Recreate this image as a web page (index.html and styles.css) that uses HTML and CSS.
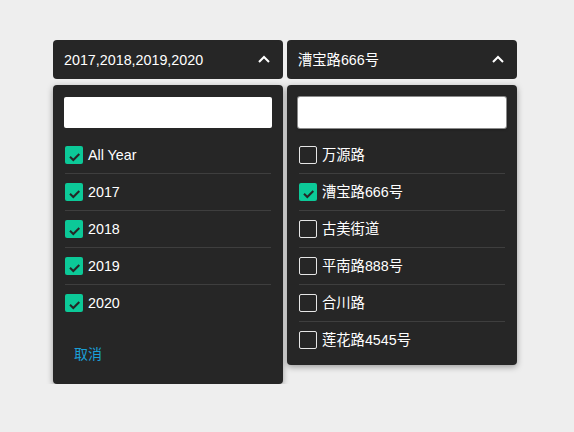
FILE: index.html
```html
<!DOCTYPE html>
<html lang="zh">
<head>
<meta charset="utf-8">
<link rel="stylesheet" href="styles.css">
</head>
<body>
<div class="page">
  <div class="select">
    <div class="head">
      <span class="value">2017,2018,2019,2020</span>
      <svg class="chev" width="12" height="8" viewBox="0 0 12 8"><path d="M1 7 L6 2 L11 7" fill="none" stroke="#fff" stroke-width="2"/></svg>
    </div>
    <div class="panel">
      <div class="search"></div>
      <ul class="list">
        <li class="row"><span class="box on"><svg viewBox="0 0 18 18"><path d="M5 10.8 L8.3 14 L14.3 8" fill="none" stroke="#262626" stroke-width="2"/></svg></span>All Year</li>
        <li class="row"><span class="box on"><svg viewBox="0 0 18 18"><path d="M5 10.8 L8.3 14 L14.3 8" fill="none" stroke="#262626" stroke-width="2"/></svg></span>2017</li>
        <li class="row"><span class="box on"><svg viewBox="0 0 18 18"><path d="M5 10.8 L8.3 14 L14.3 8" fill="none" stroke="#262626" stroke-width="2"/></svg></span>2018</li>
        <li class="row"><span class="box on"><svg viewBox="0 0 18 18"><path d="M5 10.8 L8.3 14 L14.3 8" fill="none" stroke="#262626" stroke-width="2"/></svg></span>2019</li>
        <li class="row"><span class="box on"><svg viewBox="0 0 18 18"><path d="M5 10.8 L8.3 14 L14.3 8" fill="none" stroke="#262626" stroke-width="2"/></svg></span>2020</li>
      </ul>
      <div class="footer"><a class="cancel">取消</a></div>
    </div>
  </div>
  <div class="select">
    <div class="head">
      <span class="value">漕宝路666号</span>
      <svg class="chev" width="12" height="8" viewBox="0 0 12 8"><path d="M1 7 L6 2 L11 7" fill="none" stroke="#fff" stroke-width="2"/></svg>
    </div>
    <div class="panel">
      <div class="search focused"></div>
      <ul class="list">
        <li class="row"><span class="box"></span>万源路</li>
        <li class="row"><span class="box on"><svg viewBox="0 0 18 18"><path d="M5 10.8 L8.3 14 L14.3 8" fill="none" stroke="#262626" stroke-width="2"/></svg></span>漕宝路666号</li>
        <li class="row"><span class="box"></span>古美街道</li>
        <li class="row"><span class="box"></span>平南路888号</li>
        <li class="row"><span class="box"></span>合川路</li>
        <li class="row"><span class="box"></span>莲花路4545号</li>
      </ul>
    </div>
  </div>
</div>
</body>
</html>
```
FILE: styles.css
```css
html, body {
  margin: 0;
  padding: 0;
  background: #eeeeee;
  font-family: "Liberation Sans", "Noto Sans CJK SC", sans-serif;
  font-size: 14.3px;
  color: #fff;
}
.page {
  display: flex;
  align-items: flex-start;
  gap: 4px;
  padding: 40px 0 0 53px;
}
.select {
  width: 230px;
}
.head {
  height: 39px;
  box-sizing: border-box;
  background: #262626;
  border-radius: 4px;
  display: flex;
  align-items: center;
  justify-content: space-between;
  padding: 0 13px 0 11px;
}
.value {
  line-height: 20px;
}
.chev {
  display: block;
  margin-top: -1px;
}
.panel {
  margin-top: 6px;
  background: #262626;
  border-radius: 4px;
  box-shadow: 0 2px 6px rgba(0, 0, 0, 0.35);
  padding: 12px 11px 7px 11px;
}
.search {
  height: 31px;
  box-sizing: border-box;
  background: #fff;
  border-radius: 2px;
}
.search.focused {
  box-shadow: 0 0 0 1px #8a8a8a, 0 1px 3px rgba(0,0,0,0.5);
}
.list {
  list-style: none;
  margin: 9px 1px 0 1px;
  padding: 0;
}
.row {
  height: 36px;
  display: flex;
  align-items: center;
  gap: 5px;
  border-bottom: 1px solid #3e3e3e;
  line-height: 20px;
}
.row:last-child {
  border-bottom: none;
}
.box {
  width: 18px;
  height: 18px;
  box-sizing: border-box;
  border: 1.5px solid #e6e6e6;
  border-radius: 2px;
  flex: none;
  display: flex;
}
.box.on {
  background: #0cc998;
  border: none;
}
.box svg {
  width: 18px;
  height: 18px;
}
.footer {
  padding: 23px 0 13px 10px;
  line-height: 20px;
}
.cancel {
  color: #1a9fd6;
  font-size: 14px;
}
```
